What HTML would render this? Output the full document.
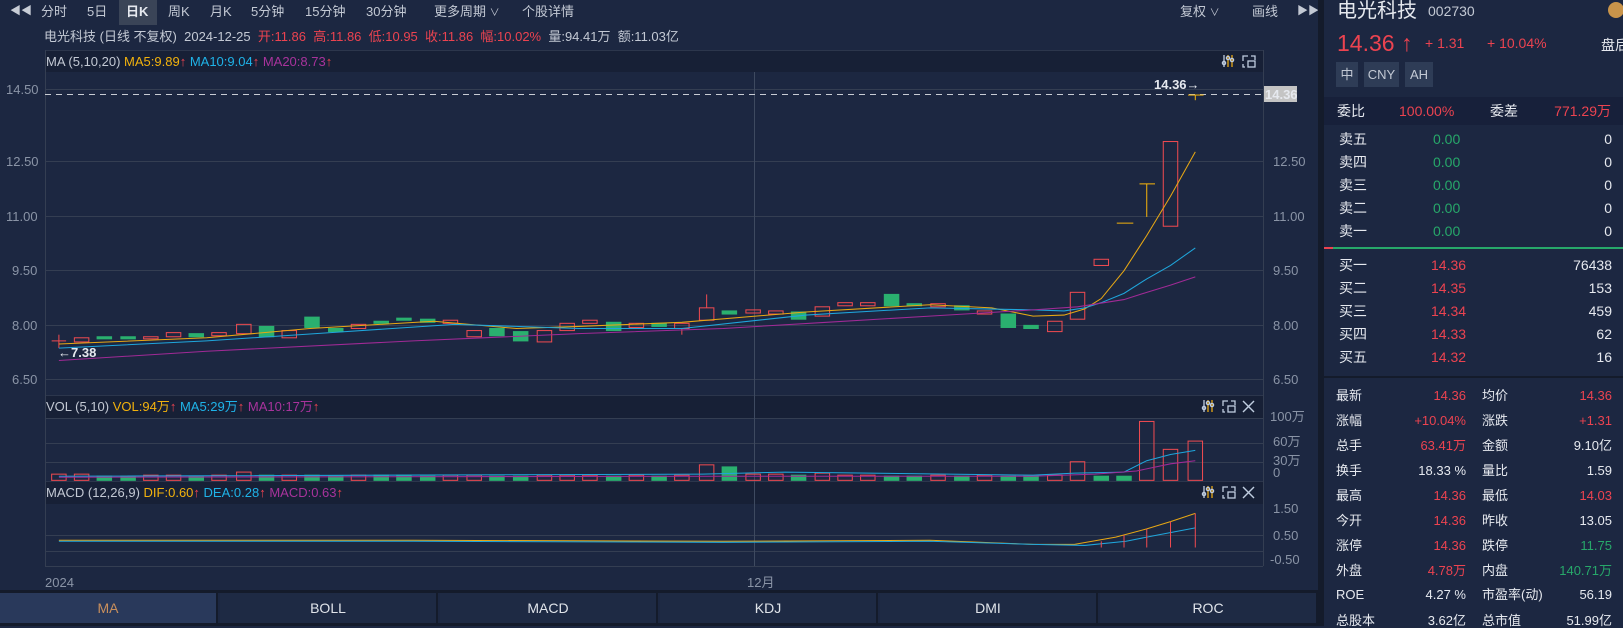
<!DOCTYPE html>
<html><head><meta charset="utf-8">
<style>
*{margin:0;padding:0;box-sizing:border-box}
body{width:1623px;height:626px;overflow:hidden;background:#1c2741;font-family:"Liberation Sans","Noto Sans CJK SC",sans-serif;color:#c3c9d4;position:relative}
.a{position:absolute;white-space:nowrap;line-height:1}
.r{color:#ec4350}.g{color:#27a86a}.y{color:#f2b20d}.b{color:#1fb3e8}.p{color:#a8339c}.w{color:#e6e9ef}
.tb{font-size:13px;top:5px}
.f13{font-size:13px}
.hdr{position:absolute;left:45px;width:1218px;background:#172036;border-top:1px solid #2c364c}
.rt{position:absolute;font-size:14px;line-height:1;white-space:nowrap}
.st{position:absolute;font-size:13px;line-height:1;white-space:nowrap}
.tab{position:absolute;top:593px;height:30px;width:218px;background:#1e2a44;border-right:2px solid #141b2b;text-align:center;font-size:14px;line-height:30px;color:#e0e4ea}
</style></head><body>
<!-- toolbar -->
<div class="a tb" style="left:10px;top:6px;font-size:11px;color:#c8cdd6">◀◀</div>
<div class="a" style="left:119px;top:0;width:38px;height:25px;background:#3a4457"></div>
<div class="a tb" style="left:41px">分时</div>
<div class="a tb" style="left:87px">5日</div>
<div class="a tb w" style="left:126px;font-weight:bold">日K</div>
<div class="a tb" style="left:168px">周K</div>
<div class="a tb" style="left:210px">月K</div>
<div class="a tb" style="left:251px">5分钟</div>
<div class="a tb" style="left:305px">15分钟</div>
<div class="a tb" style="left:366px">30分钟</div>
<div class="a tb" style="left:434px">更多周期 <span style="font-size:10px">∨</span></div>
<div class="a tb" style="left:522px">个股详情</div>
<div class="a tb" style="left:1180px">复权 <span style="font-size:10px">∨</span></div>
<div class="a tb" style="left:1252px">画线</div>
<div class="a tb" style="left:1297px;font-size:11px;top:6px">▶▶</div>
<!-- info line -->
<div class="a f13" style="left:44px;top:30px">电光科技 (日线 不复权) &nbsp;2024-12-25 &nbsp;<span class="r">开:11.86 &nbsp;高:11.86 &nbsp;低:10.95 &nbsp;收:11.86 &nbsp;幅:10.02%</span> &nbsp;量:94.41万 &nbsp;额:11.03亿</div>

<!-- headers -->
<div class="hdr" style="top:50px;height:22px"></div>
<div class="hdr" style="top:395px;height:23px"></div>
<div class="hdr" style="top:481px;height:23px"></div>

<svg class="a" style="left:0;top:0" width="1623" height="626">
<g stroke="#343e52" stroke-width="1">
<line x1="45" y1="89.5" x2="1263" y2="89.5"/><line x1="45" y1="161.5" x2="1263" y2="161.5"/>
<line x1="45" y1="216.5" x2="1263" y2="216.5"/><line x1="45" y1="270.5" x2="1263" y2="270.5"/>
<line x1="45" y1="325.5" x2="1263" y2="325.5"/><line x1="45" y1="379.5" x2="1263" y2="379.5"/>
<line x1="45" y1="418.5" x2="1263" y2="418.5"/><line x1="45" y1="443.5" x2="1263" y2="443.5"/>
<line x1="45" y1="462.5" x2="1263" y2="462.5"/>
<line x1="45" y1="535.5" x2="1263" y2="535.5"/><line x1="45" y1="551.5" x2="1263" y2="551.5"/>
<line x1="45.5" y1="50" x2="45.5" y2="566"/><line x1="1263.5" y1="50" x2="1263.5" y2="566"/>
<line x1="45" y1="566.5" x2="1263" y2="566.5"/>
<line x1="754.5" y1="72" x2="754.5" y2="566" stroke="#3e4a60"/>
</g>
<line x1="45" y1="94.5" x2="1263" y2="94.5" stroke="#c8ccd4" stroke-dasharray="6,5"/>
<rect x="1264" y="86" width="33" height="16" fill="#c4c4c4"/>
<rect x="1318" y="0" width="6" height="626" fill="#141b2b"/>
<rect x="0" y="590" width="1318" height="3" fill="#141b2b"/>
<rect x="0" y="623" width="1318" height="3" fill="#141b2b"/>
<!-- icons -->
<defs>
<g id="sl" fill="none" stroke-width="1.3">
<line x1="2" y1="1" x2="2" y2="13" stroke="#c0cde0"/><circle cx="2" cy="9" r="1.6" stroke="#c0cde0"/>
<line x1="6" y1="1" x2="6" y2="13" stroke="#e8a814"/><circle cx="6" cy="4" r="1.6" stroke="#c0cde0"/>
<line x1="10" y1="1" x2="10" y2="13" stroke="#e8a814"/><circle cx="10" cy="6" r="1.6" stroke="#c0cde0"/>
</g>
<g id="sq" fill="none" stroke="#c0cde0" stroke-width="1.3">
<path d="M1 7 V2 H6 M9 2 H13 V6"/><rect x="6" y="7" width="7" height="6"/><path d="M1 10 V13 H3"/>
</g>
<g id="x" stroke="#c0cde0" stroke-width="1.4"><line x1="1" y1="1" x2="12" y2="12"/><line x1="12" y1="1" x2="1" y2="12"/></g>
</defs>
<use href="#sl" x="1222" y="54"/><use href="#sq" x="1242" y="54"/>
<use href="#sl" x="1202" y="399"/><use href="#sq" x="1222" y="399"/><use href="#x" x="1242" y="400"/>
<use href="#sl" x="1202" y="485"/><use href="#sq" x="1222" y="485"/><use href="#x" x="1242" y="486"/>
</svg>

<!-- scaled chart shapes -->
<svg class="a" style="left:0;top:0" width="1623" height="626" viewBox="0 0 1571 606" preserveAspectRatio="none">
<g stroke-width="1" fill="none">
<g stroke="#ec4a50">
<line x1="50" y1="330" x2="64" y2="330"/><line x1="57" y1="324" x2="57" y2="337"/>
<rect x="72" y="327" width="14" height="4"/><rect x="139" y="326" width="14" height="2"/>
<rect x="161" y="322" width="14" height="4"/><rect x="205" y="322" width="14" height="3"/>
<rect x="229" y="314" width="14" height="9"/><rect x="273" y="320" width="14" height="7"/>
<rect x="340" y="314" width="14" height="4"/><rect x="429" y="310" width="14" height="3"/>
<rect x="452" y="320" width="14" height="6"/><rect x="520" y="320" width="14" height="11"/>
<rect x="542" y="313" width="14" height="7"/><rect x="564" y="310" width="14" height="3"/>
<rect x="609" y="313" width="14" height="4"/><rect x="653" y="313" width="14" height="5"/>
<line x1="660" y1="318" x2="660" y2="324"/>
<rect x="677" y="298" width="14" height="12"/><line x1="684" y1="285" x2="684" y2="298"/>
<rect x="722" y="300" width="14" height="3"/><rect x="744" y="301" width="14" height="3"/>
<rect x="789" y="297" width="14" height="9"/><rect x="811" y="293" width="14" height="3"/>
<rect x="833" y="293" width="14" height="3"/><rect x="901" y="294" width="14" height="3"/>
<rect x="946" y="301" width="14" height="3"/><rect x="1014" y="311" width="14" height="10"/>
<rect x="1036" y="283" width="14" height="26"/><rect x="1059" y="251" width="14" height="6"/>
<rect x="1126" y="137" width="14" height="82"/>
</g>
<g fill="#2ab06f" stroke="#2ab06f">
<rect x="94" y="326" width="14" height="2"/><rect x="117" y="326" width="14" height="2"/>
<rect x="183" y="323" width="14" height="3"/><rect x="251" y="316" width="14" height="10"/>
<rect x="295" y="307" width="14" height="10"/><rect x="318" y="318" width="14" height="3"/>
<rect x="362" y="311" width="14" height="2"/><rect x="384" y="308" width="14" height="2"/>
<rect x="407" y="309" width="14" height="3"/><rect x="474" y="318" width="14" height="7"/>
<rect x="497" y="321" width="14" height="9"/><rect x="587" y="312" width="14" height="8"/>
<rect x="631" y="313" width="14" height="3"/><rect x="699" y="301" width="14" height="3"/>
<rect x="766" y="302" width="14" height="7"/><rect x="856" y="285" width="14" height="11"/>
<rect x="878" y="294" width="14" height="2"/><rect x="924" y="296" width="14" height="4"/>
<rect x="969" y="304" width="14" height="13"/><rect x="991" y="315" width="14" height="3"/>
</g>
<g stroke="#f2b20d">
<line x1="1081" y1="216" x2="1097" y2="216"/>
<line x1="1103" y1="178" x2="1118" y2="178"/><line x1="1110" y1="178" x2="1110" y2="210"/>
<line x1="1150" y1="92" x2="1165" y2="92"/><line x1="1157" y1="92" x2="1157" y2="97"/>
</g>
<polyline stroke="#e8a814" points="57,333 200,327 300,318 420,311 500,318 560,316 660,312 780,302 900,295 960,298 1000,306 1030,305 1050,299 1066,289 1088,262 1110,228 1133,190 1157,147"/>
<polyline stroke="#1fa6dc" points="57,337 200,330 320,322 440,314 560,318 660,318 780,305 900,298 1000,300 1030,301 1050,298 1066,293 1088,284 1110,270 1133,257 1157,240"/>
<polyline stroke="#a02a96" points="57,349 200,340 400,330 560,323 700,318 800,312 900,306 1000,300 1043,297 1088,290 1110,283 1133,276 1157,268"/>
<g stroke="#ec4a50">
<rect x="50" y="459" width="14" height="6"/><rect x="72" y="459" width="14" height="6"/>
<rect x="139" y="460" width="14" height="5"/><rect x="161" y="460" width="14" height="5"/>
<rect x="205" y="460" width="14" height="5"/><rect x="229" y="457" width="14" height="8"/>
<rect x="273" y="460" width="14" height="5"/><rect x="340" y="460" width="14" height="5"/>
<rect x="429" y="460" width="14" height="5"/><rect x="452" y="460" width="14" height="5"/>
<rect x="520" y="460" width="14" height="5"/><rect x="542" y="460" width="14" height="5"/>
<rect x="564" y="460" width="14" height="5"/><rect x="609" y="460" width="14" height="5"/>
<rect x="653" y="460" width="14" height="5"/><rect x="677" y="450" width="14" height="15"/>
<rect x="722" y="459" width="14" height="6"/><rect x="744" y="459" width="14" height="6"/>
<rect x="789" y="458" width="14" height="7"/><rect x="811" y="460" width="14" height="5"/>
<rect x="833" y="460" width="14" height="5"/><rect x="901" y="460" width="14" height="5"/>
<rect x="946" y="460" width="14" height="5"/><rect x="1014" y="460" width="14" height="5"/>
<rect x="1036" y="447" width="14" height="18"/><rect x="1103" y="408" width="14" height="57"/>
<rect x="1126" y="435" width="14" height="30"/><rect x="1150" y="427" width="14" height="38"/>
</g>
<g fill="#2ab06f" stroke="#2ab06f">
<rect x="94" y="461" width="14" height="4"/><rect x="117" y="461" width="14" height="4"/>
<rect x="183" y="461" width="14" height="4"/><rect x="251" y="460" width="14" height="5"/>
<rect x="295" y="460" width="14" height="5"/><rect x="318" y="461" width="14" height="4"/>
<rect x="362" y="460" width="14" height="5"/><rect x="384" y="460" width="14" height="5"/>
<rect x="407" y="461" width="14" height="4"/><rect x="474" y="461" width="14" height="4"/>
<rect x="497" y="461" width="14" height="4"/><rect x="587" y="461" width="14" height="4"/>
<rect x="631" y="461" width="14" height="4"/><rect x="699" y="452" width="14" height="13"/>
<rect x="766" y="460" width="14" height="5"/><rect x="856" y="461" width="14" height="4"/>
<rect x="878" y="461" width="14" height="4"/><rect x="924" y="461" width="14" height="4"/>
<rect x="969" y="461" width="14" height="4"/><rect x="991" y="461" width="14" height="4"/>
<rect x="1059" y="461" width="14" height="4"/><rect x="1081" y="461" width="14" height="4"/>
</g>
<polyline stroke="#1fa6dc" points="57,461 680,459 760,457 1000,460 1040,458 1088,457 1110,446 1133,440 1157,436"/>
<polyline stroke="#a02a96" points="57,462 700,461 1000,461 1060,459 1100,456 1133,449 1157,446"/>
<polyline stroke="#e8a814" points="57,523 400,523 700,524 900,523 1000,527 1040,527 1080,520 1110,512 1133,505 1157,497"/>
<polyline stroke="#1fa6dc" points="57,524 400,524 700,525 900,524 1000,527 1050,528 1090,524 1120,518 1157,511"/>
<g stroke="#ec4a50">
<line x1="1066" y1="524" x2="1066" y2="530"/>
<line x1="1088" y1="518" x2="1088" y2="530"/><line x1="1110" y1="512" x2="1110" y2="530"/>
<line x1="1133" y1="505" x2="1133" y2="530"/><line x1="1157" y1="497" x2="1157" y2="530"/>
</g>
</g>
</svg>

<div class="a f13" style="left:46px;top:55px">MA (5,10,20) <span class="y">MA5:9.89</span><span class="r">↑</span> <span class="b">MA10:9.04</span><span class="r">↑</span> <span class="p">MA20:8.73</span><span class="r">↑</span></div>
<div class="a f13" style="left:46px;top:400px">VOL (5,10) <span class="y">VOL:94万</span><span class="r">↑</span> <span class="b">MA5:29万</span><span class="r">↑</span> <span class="p">MA10:17万</span><span class="r">↑</span></div>
<div class="a f13" style="left:46px;top:486px">MACD (12,26,9) <span class="y">DIF:0.60</span><span class="r">↑</span> <span class="b">DEA:0.28</span><span class="r">↑</span> <span class="p">MACD:0.63</span><span class="r">↑</span></div>

<div class="a f13" style="left:6px;top:83px;color:#8a94a6">14.50</div>
<div class="a f13" style="left:6px;top:155px;color:#8a94a6">12.50</div>
<div class="a f13" style="left:6px;top:210px;color:#8a94a6">11.00</div>
<div class="a f13" style="left:12px;top:264px;color:#8a94a6">9.50</div>
<div class="a f13" style="left:12px;top:319px;color:#8a94a6">8.00</div>
<div class="a f13" style="left:12px;top:373px;color:#8a94a6">6.50</div>
<div class="a f13" style="left:45px;top:576px;color:#8a94a6">2024</div>
<div class="a f13" style="left:747px;top:576px;color:#8a94a6">12月</div>
<div class="a f13 w" style="left:58px;top:346px;font-weight:bold">←7.38</div>
<div class="a f13 w" style="left:1154px;top:78px;font-weight:bold">14.36→</div>
<div class="a f13 w" style="left:1265px;top:88px;font-weight:bold">14.36</div>
<div class="a f13" style="left:1273px;top:155px;color:#8a94a6">12.50</div>
<div class="a f13" style="left:1273px;top:210px;color:#8a94a6">11.00</div>
<div class="a f13" style="left:1273px;top:264px;color:#8a94a6">9.50</div>
<div class="a f13" style="left:1273px;top:319px;color:#8a94a6">8.00</div>
<div class="a f13" style="left:1273px;top:373px;color:#8a94a6">6.50</div>
<div class="a f13" style="left:1270px;top:410px;color:#8a94a6">100万</div>
<div class="a f13" style="left:1273px;top:435px;color:#8a94a6">60万</div>
<div class="a f13" style="left:1273px;top:454px;color:#8a94a6">30万</div>
<div class="a f13" style="left:1273px;top:466px;color:#8a94a6">0</div>
<div class="a f13" style="left:1273px;top:502px;color:#8a94a6">1.50</div>
<div class="a f13" style="left:1273px;top:529px;color:#8a94a6">0.50</div>
<div class="a f13" style="left:1270px;top:553px;color:#8a94a6">-0.50</div>

<div class="tab" style="left:0;background:#29395b;color:#c98f5c">MA</div>
<div class="tab" style="left:220px">BOLL</div>
<div class="tab" style="left:440px">MACD</div>
<div class="tab" style="left:660px">KDJ</div>
<div class="tab" style="left:880px">DMI</div>
<div class="tab" style="left:1100px;width:218px">ROC</div>

<!-- right panel -->
<div class="a" style="left:1324px;top:0;width:299px;height:626px;background:#1c2741"></div>
<div class="a w" style="left:1337px;top:1px;font-size:20px">电光科技</div>
<div class="a" style="left:1428px;top:4px;font-size:14px;color:#c3c9d4">002730</div>
<div class="a" style="left:1608px;top:2px;width:16px;height:16px;border-radius:8px;background:#c9944a"></div>
<div class="a r" style="left:1337px;top:32px;font-size:23px">14.36 ↑</div>
<div class="a r" style="left:1425px;top:36px;font-size:14px">+ 1.31</div>
<div class="a r" style="left:1487px;top:36px;font-size:14px">+ 10.04%</div>
<div class="a w" style="left:1601px;top:38px;font-size:14px">盘后</div>
<div class="a" style="left:1336px;top:62px;width:22px;height:25px;background:#2e3c56;font-size:13px;line-height:25px;text-align:center">中</div>
<div class="a" style="left:1364px;top:62px;width:35px;height:25px;background:#2e3c56;font-size:13px;line-height:25px;text-align:center">CNY</div>
<div class="a" style="left:1405px;top:62px;width:28px;height:25px;background:#2e3c56;font-size:13px;line-height:25px;text-align:center">AH</div>
<div class="a" style="left:1324px;top:97px;width:299px;height:28px;background:#17203a"></div>
<div class="rt w" style="left:1337px;top:104px">委比</div>
<div class="rt r" style="left:1399px;top:104px">100.00%</div>
<div class="rt w" style="left:1490px;top:104px">委差</div>
<div class="rt r" style="right:12px;top:104px">771.29万</div>

<div class="rt w" style="left:1339px;top:132px">卖五</div><div class="rt g" style="left:1433px;top:132px">0.00</div><div class="rt w" style="right:11px;top:132px">0</div>
<div class="rt w" style="left:1339px;top:155px">卖四</div><div class="rt g" style="left:1433px;top:155px">0.00</div><div class="rt w" style="right:11px;top:155px">0</div>
<div class="rt w" style="left:1339px;top:178px">卖三</div><div class="rt g" style="left:1433px;top:178px">0.00</div><div class="rt w" style="right:11px;top:178px">0</div>
<div class="rt w" style="left:1339px;top:201px">卖二</div><div class="rt g" style="left:1433px;top:201px">0.00</div><div class="rt w" style="right:11px;top:201px">0</div>
<div class="rt w" style="left:1339px;top:224px">卖一</div><div class="rt g" style="left:1433px;top:224px">0.00</div><div class="rt w" style="right:11px;top:224px">0</div>
<div class="a" style="left:1324px;top:247px;width:299px;height:2px;background:#27a86a"></div>
<div class="a" style="left:1324px;top:247px;width:9px;height:2px;background:#ec4350"></div>
<div class="rt w" style="left:1339px;top:258px">买一</div><div class="rt r" style="left:1431px;top:258px">14.36</div><div class="rt w" style="right:11px;top:258px">76438</div>
<div class="rt w" style="left:1339px;top:281px">买二</div><div class="rt r" style="left:1431px;top:281px">14.35</div><div class="rt w" style="right:11px;top:281px">153</div>
<div class="rt w" style="left:1339px;top:304px">买三</div><div class="rt r" style="left:1431px;top:304px">14.34</div><div class="rt w" style="right:11px;top:304px">459</div>
<div class="rt w" style="left:1339px;top:327px">买四</div><div class="rt r" style="left:1431px;top:327px">14.33</div><div class="rt w" style="right:11px;top:327px">62</div>
<div class="rt w" style="left:1339px;top:350px">买五</div><div class="rt r" style="left:1431px;top:350px">14.32</div><div class="rt w" style="right:11px;top:350px">16</div>
<div class="a" style="left:1324px;top:376px;width:299px;height:2px;background:#141b2b"></div>

<div class="st w" style="left:1336px;top:389px">最新</div><div class="st r" style="right:157px;top:389px">14.36</div><div class="st w" style="left:1482px;top:389px">均价</div><div class="st r" style="right:11px;top:389px">14.36</div>
<div class="st w" style="left:1336px;top:414px">涨幅</div><div class="st r" style="right:157px;top:414px">+10.04%</div><div class="st w" style="left:1482px;top:414px">涨跌</div><div class="st r" style="right:11px;top:414px">+1.31</div>
<div class="st w" style="left:1336px;top:439px">总手</div><div class="st r" style="right:157px;top:439px">63.41万</div><div class="st w" style="left:1482px;top:439px">金额</div><div class="st w" style="right:11px;top:439px">9.10亿</div>
<div class="st w" style="left:1336px;top:464px">换手</div><div class="st w" style="right:157px;top:464px">18.33 %</div><div class="st w" style="left:1482px;top:464px">量比</div><div class="st w" style="right:11px;top:464px">1.59</div>
<div class="st w" style="left:1336px;top:489px">最高</div><div class="st r" style="right:157px;top:489px">14.36</div><div class="st w" style="left:1482px;top:489px">最低</div><div class="st r" style="right:11px;top:489px">14.03</div>
<div class="st w" style="left:1336px;top:514px">今开</div><div class="st r" style="right:157px;top:514px">14.36</div><div class="st w" style="left:1482px;top:514px">昨收</div><div class="st w" style="right:11px;top:514px">13.05</div>
<div class="st w" style="left:1336px;top:539px">涨停</div><div class="st r" style="right:157px;top:539px">14.36</div><div class="st w" style="left:1482px;top:539px">跌停</div><div class="st g" style="right:11px;top:539px">11.75</div>
<div class="st w" style="left:1336px;top:564px">外盘</div><div class="st r" style="right:157px;top:564px">4.78万</div><div class="st w" style="left:1482px;top:564px">内盘</div><div class="st g" style="right:11px;top:564px">140.71万</div>
<div class="st w" style="left:1336px;top:588px">ROE</div><div class="st w" style="right:157px;top:588px">4.27 %</div><div class="st w" style="left:1482px;top:588px">市盈率(动)</div><div class="st w" style="right:11px;top:588px">56.19</div>
<div class="st w" style="left:1336px;top:614px">总股本</div><div class="st w" style="right:157px;top:614px">3.62亿</div><div class="st w" style="left:1482px;top:614px">总市值</div><div class="st w" style="right:11px;top:614px">51.99亿</div>
</body></html>
